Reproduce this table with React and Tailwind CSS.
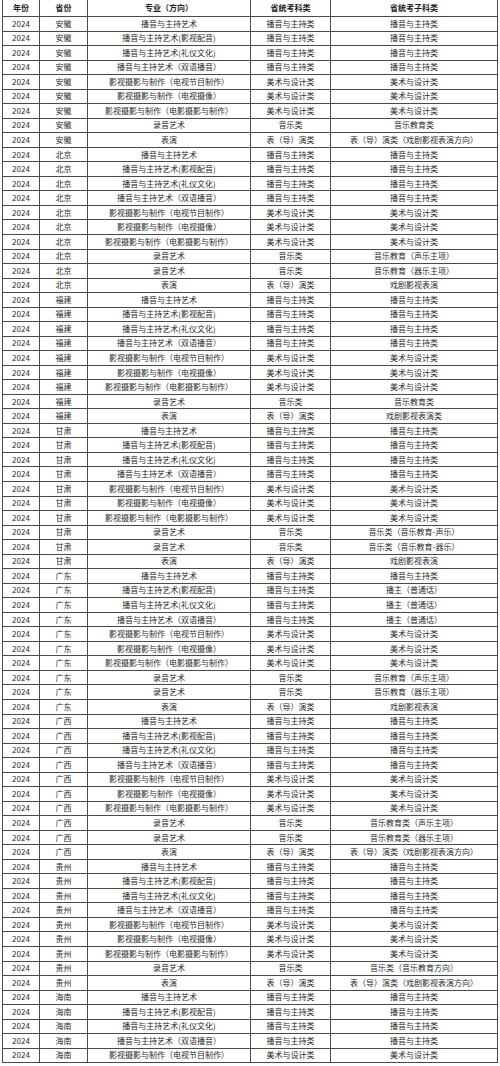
import React from "react";

const BOY = ["播音与主持艺术", "播音与主持艺术(影视配音)", "播音与主持艺术(礼仪文化)", "播音与主持艺术（双语播音）"];
const YS = ["影视摄影与制作（电视节目制作）", "影视摄影与制作（电视摄像）", "影视摄影与制作（电影摄影与制作）"];
const BY = "播音与主持类";
const MS = "美术与设计类";
const YY = "音乐类";
const BD = "表（导）演类";

function base(p, sub2) {
  const rows = [];
  BOY.forEach((m, i) => rows.push([p, m, BY, sub2 ? sub2[i] : BY]));
  YS.forEach((m) => rows.push([p, m, MS, MS]));
  return rows;
}

const rows = [
  ...base("安徽"),
  ["安徽", "录音艺术", YY, "音乐教育类"],
  ["安徽", "表演", BD, "表（导）演类（戏剧影视表演方向）"],
  ...base("北京"),
  ["北京", "录音艺术", YY, "音乐教育（声乐主项）"],
  ["北京", "录音艺术", YY, "音乐教育（器乐主项）"],
  ["北京", "表演", BD, "戏剧影视表演"],
  ...base("福建"),
  ["福建", "录音艺术", YY, "音乐教育类"],
  ["福建", "表演", BD, "戏剧影视表演类"],
  ...base("甘肃"),
  ["甘肃", "录音艺术", YY, "音乐类（音乐教育-声乐）"],
  ["甘肃", "录音艺术", YY, "音乐类（音乐教育-器乐）"],
  ["甘肃", "表演", BD, "戏剧影视表演"],
  ...base("广东", [BY, "播主（普通话）", "播主（普通话）", "播主（普通话）"]),
  ["广东", "录音艺术", YY, "音乐教育（声乐主项）"],
  ["广东", "录音艺术", YY, "音乐教育（器乐主项）"],
  ["广东", "表演", BD, "戏剧影视表演"],
  ...base("广西"),
  ["广西", "录音艺术", YY, "音乐教育类（声乐主项）"],
  ["广西", "录音艺术", YY, "音乐教育类（器乐主项）"],
  ["广西", "表演", BD, "表（导）演类（戏剧影视表演方向）"],
  ...base("贵州"),
  ["贵州", "录音艺术", YY, "音乐类（音乐教育方向）"],
  ["贵州", "表演", BD, "表（导）演类（戏剧影视表演方向）"],
  ...base("海南").slice(0, 5),
];

const FONT = { fontFamily: '"Noto Sans CJK SC", "Noto Sans", sans-serif' };

function Row({ cells, header }) {
  return (
    <div
      className={
        "grid grid-cols-[37px_48px_163px_80px_167px] border-b border-[#4a4a4a] " +
        (header ? "h-[17px] font-bold text-[#1f1f1f]" : "h-[14.54px] text-[#2a2a2a]")
      }
    >
      {cells.map((c, i) => (
        <div
          key={i}
          className="flex items-center justify-center border-r border-[#4a4a4a] text-[8px] leading-none whitespace-nowrap overflow-hidden"
        >
          {c}
        </div>
      ))}
    </div>
  );
}

export default function App() {
  return (
    <div className="w-[500px] h-[1066px] bg-white overflow-hidden" style={FONT}>
      <div className="ml-[2px] w-[496px] border-l border-[#4a4a4a]">
        <Row header cells={["年份", "省份", "专业（方向）", "省统考科类", "省统考子科类"]} />
        {rows.map((r, i) => (
          <Row key={i} cells={["2024", ...r]} />
        ))}
      </div>
    </div>
  );
}
